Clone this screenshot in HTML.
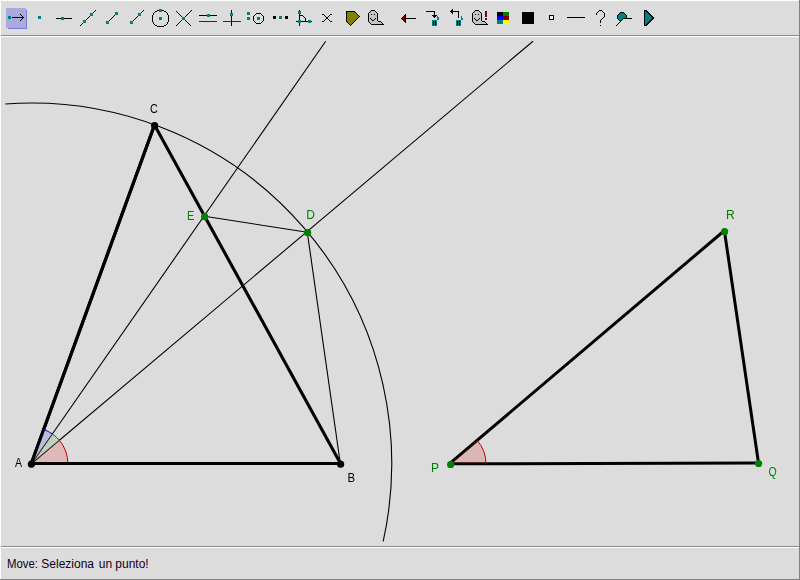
<!DOCTYPE html>
<html><head><meta charset="utf-8">
<style>
html,body{margin:0;padding:0;width:800px;height:580px;overflow:hidden;background:#dcdcdc;}
svg{display:block;font-family:"Liberation Sans",sans-serif;}
</style></head><body>
<svg width="800" height="580" viewBox="0 0 800 580">
<rect x="0" y="0" width="800" height="580" fill="#dcdcdc"/>
<g shape-rendering="crispEdges">
<rect x="0" y="0" width="800" height="1" fill="#ffffff"/>
<rect x="0" y="0" width="1" height="580" fill="#ffffff"/>
<rect x="799" y="0" width="1" height="580" fill="#808080"/>
<rect x="0" y="579" width="800" height="1" fill="#808080"/>
<rect x="1" y="35" width="798" height="1" fill="#8c8c8c"/>
<rect x="1" y="36" width="798" height="1" fill="#ffffff"/>
<rect x="1" y="546" width="798" height="1" fill="#8c8c8c"/>
<rect x="1" y="547" width="798" height="1" fill="#ffffff"/>
</g>
<g shape-rendering="crispEdges">
<rect x="6" y="8" width="20" height="1" fill="#aaaadc"/>
<rect x="6" y="9" width="20" height="1" fill="#aaaadc"/>
<rect x="159" y="9" width="3" height="1" fill="#008080"/>
<rect x="452" y="9" width="1" height="1" fill="#000000"/>
<rect x="6" y="10" width="20" height="1" fill="#aaaadc"/>
<rect x="26" y="10" width="1" height="1" fill="#7878e0"/>
<rect x="95" y="10" width="1" height="1" fill="#000000"/>
<rect x="143" y="10" width="1" height="1" fill="#000000"/>
<rect x="157" y="10" width="2" height="1" fill="#000000"/>
<rect x="159" y="10" width="3" height="1" fill="#008080"/>
<rect x="162" y="10" width="2" height="1" fill="#000000"/>
<rect x="191" y="10" width="1" height="1" fill="#000000"/>
<rect x="231" y="10" width="1" height="1" fill="#000000"/>
<rect x="299" y="10" width="1" height="1" fill="#000000"/>
<rect x="371" y="10" width="4" height="1" fill="#000000"/>
<rect x="451" y="10" width="2" height="1" fill="#000000"/>
<rect x="475" y="10" width="4" height="1" fill="#000000"/>
<rect x="599" y="10" width="3" height="1" fill="#000000"/>
<rect x="644" y="10" width="3" height="1" fill="#000000"/>
<rect x="6" y="11" width="20" height="1" fill="#aaaadc"/>
<rect x="26" y="11" width="1" height="1" fill="#7878e0"/>
<rect x="94" y="11" width="1" height="1" fill="#000000"/>
<rect x="142" y="11" width="1" height="1" fill="#000000"/>
<rect x="155" y="11" width="2" height="1" fill="#000000"/>
<rect x="159" y="11" width="3" height="1" fill="#008080"/>
<rect x="164" y="11" width="2" height="1" fill="#000000"/>
<rect x="176" y="11" width="1" height="1" fill="#000000"/>
<rect x="190" y="11" width="1" height="1" fill="#000000"/>
<rect x="231" y="11" width="1" height="1" fill="#000000"/>
<rect x="298" y="11" width="3" height="1" fill="#008080"/>
<rect x="346" y="11" width="9" height="1" fill="#000000"/>
<rect x="370" y="11" width="1" height="1" fill="#000000"/>
<rect x="371" y="11" width="4" height="1" fill="#c4c4c4"/>
<rect x="375" y="11" width="1" height="1" fill="#000000"/>
<rect x="426" y="11" width="9" height="1" fill="#000000"/>
<rect x="450" y="11" width="9" height="1" fill="#000000"/>
<rect x="474" y="11" width="1" height="1" fill="#000000"/>
<rect x="475" y="11" width="4" height="1" fill="#c4c4c4"/>
<rect x="479" y="11" width="1" height="1" fill="#000000"/>
<rect x="485" y="11" width="2" height="1" fill="#800000"/>
<rect x="598" y="11" width="1" height="1" fill="#000000"/>
<rect x="602" y="11" width="1" height="1" fill="#000000"/>
<rect x="644" y="11" width="1" height="1" fill="#000000"/>
<rect x="645" y="11" width="1" height="1" fill="#008080"/>
<rect x="646" y="11" width="2" height="1" fill="#000000"/>
<rect x="6" y="12" width="20" height="1" fill="#aaaadc"/>
<rect x="26" y="12" width="1" height="1" fill="#7878e0"/>
<rect x="93" y="12" width="1" height="1" fill="#000000"/>
<rect x="115" y="12" width="3" height="1" fill="#008080"/>
<rect x="141" y="12" width="1" height="1" fill="#000000"/>
<rect x="154" y="12" width="1" height="1" fill="#000000"/>
<rect x="166" y="12" width="1" height="1" fill="#000000"/>
<rect x="177" y="12" width="1" height="1" fill="#000000"/>
<rect x="189" y="12" width="1" height="1" fill="#000000"/>
<rect x="231" y="12" width="1" height="1" fill="#000000"/>
<rect x="247" y="12" width="3" height="1" fill="#008080"/>
<rect x="298" y="12" width="3" height="1" fill="#008080"/>
<rect x="346" y="12" width="1" height="1" fill="#000000"/>
<rect x="347" y="12" width="8" height="1" fill="#808000"/>
<rect x="355" y="12" width="1" height="1" fill="#000000"/>
<rect x="369" y="12" width="1" height="1" fill="#000000"/>
<rect x="370" y="12" width="6" height="1" fill="#c4c4c4"/>
<rect x="376" y="12" width="1" height="1" fill="#000000"/>
<rect x="434" y="12" width="1" height="1" fill="#000000"/>
<rect x="451" y="12" width="2" height="1" fill="#000000"/>
<rect x="458" y="12" width="1" height="1" fill="#000000"/>
<rect x="473" y="12" width="1" height="1" fill="#000000"/>
<rect x="474" y="12" width="6" height="1" fill="#c4c4c4"/>
<rect x="480" y="12" width="1" height="1" fill="#000000"/>
<rect x="485" y="12" width="2" height="1" fill="#800000"/>
<rect x="497" y="12" width="6" height="1" fill="#000000"/>
<rect x="503" y="12" width="6" height="1" fill="#008000"/>
<rect x="522" y="12" width="12" height="1" fill="#000000"/>
<rect x="597" y="12" width="1" height="1" fill="#000000"/>
<rect x="603" y="12" width="1" height="1" fill="#000000"/>
<rect x="620" y="12" width="4" height="1" fill="#000000"/>
<rect x="644" y="12" width="1" height="1" fill="#000000"/>
<rect x="645" y="12" width="2" height="1" fill="#008080"/>
<rect x="647" y="12" width="2" height="1" fill="#000000"/>
<rect x="6" y="13" width="20" height="1" fill="#aaaadc"/>
<rect x="26" y="13" width="1" height="1" fill="#7878e0"/>
<rect x="90" y="13" width="3" height="1" fill="#008080"/>
<rect x="115" y="13" width="3" height="1" fill="#008080"/>
<rect x="138" y="13" width="3" height="1" fill="#008080"/>
<rect x="153" y="13" width="1" height="1" fill="#000000"/>
<rect x="167" y="13" width="1" height="1" fill="#000000"/>
<rect x="178" y="13" width="1" height="1" fill="#000000"/>
<rect x="188" y="13" width="1" height="1" fill="#000000"/>
<rect x="230" y="13" width="3" height="1" fill="#008080"/>
<rect x="247" y="13" width="3" height="1" fill="#008080"/>
<rect x="256" y="13" width="5" height="1" fill="#000000"/>
<rect x="298" y="13" width="3" height="1" fill="#008080"/>
<rect x="346" y="13" width="1" height="1" fill="#000000"/>
<rect x="347" y="13" width="9" height="1" fill="#808000"/>
<rect x="356" y="13" width="1" height="1" fill="#000000"/>
<rect x="368" y="13" width="1" height="1" fill="#000000"/>
<rect x="369" y="13" width="8" height="1" fill="#c4c4c4"/>
<rect x="377" y="13" width="1" height="1" fill="#000000"/>
<rect x="434" y="13" width="1" height="1" fill="#000000"/>
<rect x="452" y="13" width="1" height="1" fill="#000000"/>
<rect x="458" y="13" width="1" height="1" fill="#000000"/>
<rect x="472" y="13" width="1" height="1" fill="#000000"/>
<rect x="473" y="13" width="8" height="1" fill="#c4c4c4"/>
<rect x="481" y="13" width="1" height="1" fill="#000000"/>
<rect x="485" y="13" width="2" height="1" fill="#800000"/>
<rect x="497" y="13" width="6" height="1" fill="#000000"/>
<rect x="503" y="13" width="6" height="1" fill="#008000"/>
<rect x="522" y="13" width="12" height="1" fill="#000000"/>
<rect x="596" y="13" width="1" height="1" fill="#000000"/>
<rect x="604" y="13" width="1" height="1" fill="#000000"/>
<rect x="619" y="13" width="1" height="1" fill="#000000"/>
<rect x="620" y="13" width="4" height="1" fill="#008080"/>
<rect x="624" y="13" width="1" height="1" fill="#000000"/>
<rect x="644" y="13" width="1" height="1" fill="#000000"/>
<rect x="645" y="13" width="3" height="1" fill="#008080"/>
<rect x="648" y="13" width="2" height="1" fill="#000000"/>
<rect x="6" y="14" width="14" height="1" fill="#aaaadc"/>
<rect x="20" y="14" width="1" height="1" fill="#000000"/>
<rect x="21" y="14" width="5" height="1" fill="#aaaadc"/>
<rect x="26" y="14" width="1" height="1" fill="#7878e0"/>
<rect x="90" y="14" width="3" height="1" fill="#008080"/>
<rect x="115" y="14" width="3" height="1" fill="#008080"/>
<rect x="138" y="14" width="3" height="1" fill="#008080"/>
<rect x="153" y="14" width="1" height="1" fill="#000000"/>
<rect x="167" y="14" width="1" height="1" fill="#000000"/>
<rect x="179" y="14" width="1" height="1" fill="#000000"/>
<rect x="187" y="14" width="1" height="1" fill="#000000"/>
<rect x="207" y="14" width="3" height="1" fill="#008080"/>
<rect x="230" y="14" width="3" height="1" fill="#008080"/>
<rect x="247" y="14" width="3" height="1" fill="#008080"/>
<rect x="255" y="14" width="1" height="1" fill="#000000"/>
<rect x="261" y="14" width="1" height="1" fill="#000000"/>
<rect x="299" y="14" width="1" height="1" fill="#000000"/>
<rect x="322" y="14" width="2" height="1" fill="#000000"/>
<rect x="330" y="14" width="2" height="1" fill="#000000"/>
<rect x="346" y="14" width="1" height="1" fill="#000000"/>
<rect x="347" y="14" width="10" height="1" fill="#808000"/>
<rect x="357" y="14" width="1" height="1" fill="#000000"/>
<rect x="368" y="14" width="1" height="1" fill="#000000"/>
<rect x="369" y="14" width="2" height="1" fill="#c4c4c4"/>
<rect x="371" y="14" width="1" height="1" fill="#000000"/>
<rect x="372" y="14" width="2" height="1" fill="#c4c4c4"/>
<rect x="374" y="14" width="1" height="1" fill="#000000"/>
<rect x="375" y="14" width="2" height="1" fill="#c4c4c4"/>
<rect x="377" y="14" width="1" height="1" fill="#000000"/>
<rect x="405" y="14" width="1" height="1" fill="#000000"/>
<rect x="434" y="14" width="1" height="1" fill="#000000"/>
<rect x="458" y="14" width="1" height="1" fill="#000000"/>
<rect x="472" y="14" width="1" height="1" fill="#000000"/>
<rect x="473" y="14" width="2" height="1" fill="#c4c4c4"/>
<rect x="475" y="14" width="1" height="1" fill="#000000"/>
<rect x="476" y="14" width="2" height="1" fill="#c4c4c4"/>
<rect x="478" y="14" width="1" height="1" fill="#000000"/>
<rect x="479" y="14" width="2" height="1" fill="#c4c4c4"/>
<rect x="481" y="14" width="1" height="1" fill="#000000"/>
<rect x="485" y="14" width="2" height="1" fill="#800000"/>
<rect x="497" y="14" width="6" height="1" fill="#000000"/>
<rect x="503" y="14" width="6" height="1" fill="#008000"/>
<rect x="522" y="14" width="12" height="1" fill="#000000"/>
<rect x="596" y="14" width="1" height="1" fill="#000000"/>
<rect x="604" y="14" width="1" height="1" fill="#000000"/>
<rect x="618" y="14" width="1" height="1" fill="#000000"/>
<rect x="619" y="14" width="6" height="1" fill="#008080"/>
<rect x="625" y="14" width="1" height="1" fill="#000000"/>
<rect x="644" y="14" width="1" height="1" fill="#000000"/>
<rect x="645" y="14" width="4" height="1" fill="#008080"/>
<rect x="649" y="14" width="2" height="1" fill="#000000"/>
<rect x="6" y="15" width="15" height="1" fill="#aaaadc"/>
<rect x="21" y="15" width="1" height="1" fill="#000000"/>
<rect x="22" y="15" width="4" height="1" fill="#aaaadc"/>
<rect x="26" y="15" width="1" height="1" fill="#7878e0"/>
<rect x="90" y="15" width="3" height="1" fill="#008080"/>
<rect x="114" y="15" width="1" height="1" fill="#000000"/>
<rect x="138" y="15" width="3" height="1" fill="#008080"/>
<rect x="152" y="15" width="1" height="1" fill="#000000"/>
<rect x="168" y="15" width="1" height="1" fill="#000000"/>
<rect x="180" y="15" width="1" height="1" fill="#000000"/>
<rect x="186" y="15" width="1" height="1" fill="#000000"/>
<rect x="199" y="15" width="8" height="1" fill="#000000"/>
<rect x="207" y="15" width="3" height="1" fill="#008080"/>
<rect x="210" y="15" width="7" height="1" fill="#000000"/>
<rect x="230" y="15" width="3" height="1" fill="#008080"/>
<rect x="254" y="15" width="1" height="1" fill="#000000"/>
<rect x="262" y="15" width="1" height="1" fill="#000000"/>
<rect x="299" y="15" width="4" height="1" fill="#000000"/>
<rect x="324" y="15" width="1" height="1" fill="#000000"/>
<rect x="329" y="15" width="1" height="1" fill="#000000"/>
<rect x="346" y="15" width="1" height="1" fill="#000000"/>
<rect x="347" y="15" width="11" height="1" fill="#808000"/>
<rect x="358" y="15" width="1" height="1" fill="#000000"/>
<rect x="368" y="15" width="1" height="1" fill="#000000"/>
<rect x="369" y="15" width="8" height="1" fill="#c4c4c4"/>
<rect x="377" y="15" width="1" height="1" fill="#000000"/>
<rect x="404" y="15" width="2" height="1" fill="#000000"/>
<rect x="432" y="15" width="5" height="1" fill="#000000"/>
<rect x="458" y="15" width="1" height="1" fill="#000000"/>
<rect x="472" y="15" width="1" height="1" fill="#000000"/>
<rect x="473" y="15" width="8" height="1" fill="#c4c4c4"/>
<rect x="481" y="15" width="1" height="1" fill="#000000"/>
<rect x="485" y="15" width="2" height="1" fill="#800000"/>
<rect x="497" y="15" width="6" height="1" fill="#000000"/>
<rect x="503" y="15" width="6" height="1" fill="#008000"/>
<rect x="522" y="15" width="12" height="1" fill="#000000"/>
<rect x="549" y="15" width="5" height="1" fill="#000000"/>
<rect x="604" y="15" width="1" height="1" fill="#000000"/>
<rect x="617" y="15" width="1" height="1" fill="#000000"/>
<rect x="618" y="15" width="8" height="1" fill="#008080"/>
<rect x="626" y="15" width="1" height="1" fill="#000000"/>
<rect x="644" y="15" width="1" height="1" fill="#000000"/>
<rect x="645" y="15" width="5" height="1" fill="#008080"/>
<rect x="650" y="15" width="2" height="1" fill="#000000"/>
<rect x="6" y="16" width="2" height="1" fill="#aaaadc"/>
<rect x="8" y="16" width="3" height="1" fill="#008080"/>
<rect x="11" y="16" width="11" height="1" fill="#aaaadc"/>
<rect x="22" y="16" width="1" height="1" fill="#000000"/>
<rect x="23" y="16" width="3" height="1" fill="#aaaadc"/>
<rect x="26" y="16" width="1" height="1" fill="#7878e0"/>
<rect x="38" y="16" width="3" height="1" fill="#008080"/>
<rect x="89" y="16" width="1" height="1" fill="#000000"/>
<rect x="113" y="16" width="1" height="1" fill="#000000"/>
<rect x="137" y="16" width="1" height="1" fill="#000000"/>
<rect x="152" y="16" width="1" height="1" fill="#000000"/>
<rect x="168" y="16" width="1" height="1" fill="#000000"/>
<rect x="181" y="16" width="1" height="1" fill="#000000"/>
<rect x="185" y="16" width="1" height="1" fill="#000000"/>
<rect x="207" y="16" width="3" height="1" fill="#008080"/>
<rect x="231" y="16" width="1" height="1" fill="#000000"/>
<rect x="253" y="16" width="1" height="1" fill="#000000"/>
<rect x="263" y="16" width="1" height="1" fill="#000000"/>
<rect x="273" y="16" width="3" height="1" fill="#000000"/>
<rect x="279" y="16" width="3" height="1" fill="#008080"/>
<rect x="285" y="16" width="3" height="1" fill="#000000"/>
<rect x="299" y="16" width="1" height="1" fill="#000000"/>
<rect x="303" y="16" width="1" height="1" fill="#000000"/>
<rect x="325" y="16" width="1" height="1" fill="#000000"/>
<rect x="328" y="16" width="1" height="1" fill="#000000"/>
<rect x="346" y="16" width="1" height="1" fill="#000000"/>
<rect x="347" y="16" width="12" height="1" fill="#808000"/>
<rect x="359" y="16" width="1" height="1" fill="#000000"/>
<rect x="368" y="16" width="1" height="1" fill="#000000"/>
<rect x="369" y="16" width="8" height="1" fill="#c4c4c4"/>
<rect x="377" y="16" width="1" height="1" fill="#000000"/>
<rect x="403" y="16" width="1" height="1" fill="#000000"/>
<rect x="404" y="16" width="1" height="1" fill="#800000"/>
<rect x="405" y="16" width="1" height="1" fill="#000000"/>
<rect x="433" y="16" width="3" height="1" fill="#000000"/>
<rect x="437" y="16" width="1" height="1" fill="#008080"/>
<rect x="458" y="16" width="1" height="1" fill="#000000"/>
<rect x="461" y="16" width="1" height="1" fill="#008080"/>
<rect x="472" y="16" width="1" height="1" fill="#000000"/>
<rect x="473" y="16" width="8" height="1" fill="#c4c4c4"/>
<rect x="481" y="16" width="1" height="1" fill="#000000"/>
<rect x="485" y="16" width="2" height="1" fill="#800000"/>
<rect x="497" y="16" width="6" height="1" fill="#0000ff"/>
<rect x="503" y="16" width="6" height="1" fill="#800000"/>
<rect x="522" y="16" width="12" height="1" fill="#000000"/>
<rect x="549" y="16" width="1" height="1" fill="#000000"/>
<rect x="550" y="16" width="1" height="1" fill="#ffffff"/>
<rect x="551" y="16" width="1" height="1" fill="#f0f0f0"/>
<rect x="552" y="16" width="1" height="1" fill="#ffffff"/>
<rect x="553" y="16" width="1" height="1" fill="#000000"/>
<rect x="604" y="16" width="1" height="1" fill="#000000"/>
<rect x="617" y="16" width="1" height="1" fill="#000000"/>
<rect x="618" y="16" width="8" height="1" fill="#008080"/>
<rect x="626" y="16" width="1" height="1" fill="#000000"/>
<rect x="644" y="16" width="1" height="1" fill="#000000"/>
<rect x="645" y="16" width="6" height="1" fill="#008080"/>
<rect x="651" y="16" width="2" height="1" fill="#000000"/>
<rect x="6" y="17" width="2" height="1" fill="#aaaadc"/>
<rect x="8" y="17" width="3" height="1" fill="#008080"/>
<rect x="11" y="17" width="1" height="1" fill="#aaaadc"/>
<rect x="12" y="17" width="12" height="1" fill="#000000"/>
<rect x="24" y="17" width="2" height="1" fill="#aaaadc"/>
<rect x="26" y="17" width="1" height="1" fill="#7878e0"/>
<rect x="38" y="17" width="3" height="1" fill="#008080"/>
<rect x="61" y="17" width="3" height="1" fill="#008080"/>
<rect x="88" y="17" width="1" height="1" fill="#000000"/>
<rect x="112" y="17" width="1" height="1" fill="#000000"/>
<rect x="136" y="17" width="1" height="1" fill="#000000"/>
<rect x="152" y="17" width="1" height="1" fill="#000000"/>
<rect x="159" y="17" width="3" height="1" fill="#008080"/>
<rect x="168" y="17" width="1" height="1" fill="#000000"/>
<rect x="182" y="17" width="3" height="1" fill="#008080"/>
<rect x="231" y="17" width="1" height="1" fill="#000000"/>
<rect x="247" y="17" width="3" height="1" fill="#008080"/>
<rect x="253" y="17" width="1" height="1" fill="#000000"/>
<rect x="257" y="17" width="3" height="1" fill="#008080"/>
<rect x="263" y="17" width="1" height="1" fill="#000000"/>
<rect x="273" y="17" width="3" height="1" fill="#000000"/>
<rect x="279" y="17" width="3" height="1" fill="#008080"/>
<rect x="285" y="17" width="3" height="1" fill="#000000"/>
<rect x="299" y="17" width="1" height="1" fill="#000000"/>
<rect x="304" y="17" width="1" height="1" fill="#000000"/>
<rect x="326" y="17" width="2" height="1" fill="#000000"/>
<rect x="346" y="17" width="1" height="1" fill="#000000"/>
<rect x="347" y="17" width="11" height="1" fill="#808000"/>
<rect x="358" y="17" width="1" height="1" fill="#000000"/>
<rect x="368" y="17" width="1" height="1" fill="#000000"/>
<rect x="369" y="17" width="8" height="1" fill="#c4c4c4"/>
<rect x="377" y="17" width="1" height="1" fill="#000000"/>
<rect x="402" y="17" width="1" height="1" fill="#000000"/>
<rect x="403" y="17" width="2" height="1" fill="#800000"/>
<rect x="405" y="17" width="1" height="1" fill="#000000"/>
<rect x="434" y="17" width="1" height="1" fill="#000000"/>
<rect x="437" y="17" width="2" height="1" fill="#008080"/>
<rect x="458" y="17" width="1" height="1" fill="#000000"/>
<rect x="461" y="17" width="1" height="1" fill="#008080"/>
<rect x="472" y="17" width="1" height="1" fill="#000000"/>
<rect x="473" y="17" width="8" height="1" fill="#c4c4c4"/>
<rect x="481" y="17" width="1" height="1" fill="#000000"/>
<rect x="497" y="17" width="6" height="1" fill="#0000ff"/>
<rect x="503" y="17" width="6" height="1" fill="#800000"/>
<rect x="522" y="17" width="12" height="1" fill="#000000"/>
<rect x="549" y="17" width="1" height="1" fill="#000000"/>
<rect x="550" y="17" width="3" height="1" fill="#f0f0f0"/>
<rect x="553" y="17" width="1" height="1" fill="#000000"/>
<rect x="567" y="17" width="18" height="1" fill="#000000"/>
<rect x="603" y="17" width="1" height="1" fill="#000000"/>
<rect x="617" y="17" width="1" height="1" fill="#000000"/>
<rect x="618" y="17" width="8" height="1" fill="#008080"/>
<rect x="626" y="17" width="1" height="1" fill="#000000"/>
<rect x="644" y="17" width="1" height="1" fill="#000000"/>
<rect x="645" y="17" width="7" height="1" fill="#008080"/>
<rect x="652" y="17" width="2" height="1" fill="#000000"/>
<rect x="6" y="18" width="2" height="1" fill="#aaaadc"/>
<rect x="8" y="18" width="3" height="1" fill="#008080"/>
<rect x="11" y="18" width="11" height="1" fill="#aaaadc"/>
<rect x="22" y="18" width="1" height="1" fill="#000000"/>
<rect x="23" y="18" width="3" height="1" fill="#aaaadc"/>
<rect x="26" y="18" width="1" height="1" fill="#7878e0"/>
<rect x="38" y="18" width="3" height="1" fill="#008080"/>
<rect x="56" y="18" width="5" height="1" fill="#000000"/>
<rect x="61" y="18" width="3" height="1" fill="#008080"/>
<rect x="64" y="18" width="8" height="1" fill="#000000"/>
<rect x="87" y="18" width="1" height="1" fill="#000000"/>
<rect x="111" y="18" width="1" height="1" fill="#000000"/>
<rect x="135" y="18" width="1" height="1" fill="#000000"/>
<rect x="152" y="18" width="1" height="1" fill="#000000"/>
<rect x="159" y="18" width="3" height="1" fill="#008080"/>
<rect x="168" y="18" width="1" height="1" fill="#000000"/>
<rect x="182" y="18" width="3" height="1" fill="#008080"/>
<rect x="231" y="18" width="1" height="1" fill="#000000"/>
<rect x="247" y="18" width="3" height="1" fill="#008080"/>
<rect x="253" y="18" width="1" height="1" fill="#000000"/>
<rect x="257" y="18" width="3" height="1" fill="#008080"/>
<rect x="263" y="18" width="1" height="1" fill="#000000"/>
<rect x="273" y="18" width="3" height="1" fill="#000000"/>
<rect x="279" y="18" width="3" height="1" fill="#008080"/>
<rect x="285" y="18" width="3" height="1" fill="#000000"/>
<rect x="299" y="18" width="1" height="1" fill="#000000"/>
<rect x="305" y="18" width="1" height="1" fill="#000000"/>
<rect x="326" y="18" width="2" height="1" fill="#000000"/>
<rect x="346" y="18" width="1" height="1" fill="#000000"/>
<rect x="347" y="18" width="10" height="1" fill="#808000"/>
<rect x="357" y="18" width="1" height="1" fill="#000000"/>
<rect x="368" y="18" width="1" height="1" fill="#000000"/>
<rect x="369" y="18" width="1" height="1" fill="#c4c4c4"/>
<rect x="370" y="18" width="1" height="1" fill="#000000"/>
<rect x="371" y="18" width="4" height="1" fill="#c4c4c4"/>
<rect x="375" y="18" width="1" height="1" fill="#000000"/>
<rect x="376" y="18" width="1" height="1" fill="#c4c4c4"/>
<rect x="377" y="18" width="1" height="1" fill="#000000"/>
<rect x="401" y="18" width="1" height="1" fill="#000000"/>
<rect x="402" y="18" width="3" height="1" fill="#800000"/>
<rect x="405" y="18" width="11" height="1" fill="#000000"/>
<rect x="437" y="18" width="2" height="1" fill="#008080"/>
<rect x="461" y="18" width="2" height="1" fill="#008080"/>
<rect x="472" y="18" width="1" height="1" fill="#000000"/>
<rect x="473" y="18" width="1" height="1" fill="#c4c4c4"/>
<rect x="474" y="18" width="1" height="1" fill="#000000"/>
<rect x="475" y="18" width="4" height="1" fill="#c4c4c4"/>
<rect x="479" y="18" width="1" height="1" fill="#000000"/>
<rect x="480" y="18" width="1" height="1" fill="#c4c4c4"/>
<rect x="481" y="18" width="1" height="1" fill="#000000"/>
<rect x="485" y="18" width="2" height="1" fill="#800000"/>
<rect x="497" y="18" width="6" height="1" fill="#0000ff"/>
<rect x="503" y="18" width="6" height="1" fill="#800000"/>
<rect x="522" y="18" width="12" height="1" fill="#000000"/>
<rect x="549" y="18" width="1" height="1" fill="#000000"/>
<rect x="550" y="18" width="1" height="1" fill="#ffffff"/>
<rect x="551" y="18" width="1" height="1" fill="#f0f0f0"/>
<rect x="552" y="18" width="1" height="1" fill="#ffffff"/>
<rect x="553" y="18" width="1" height="1" fill="#000000"/>
<rect x="602" y="18" width="1" height="1" fill="#000000"/>
<rect x="617" y="18" width="1" height="1" fill="#000000"/>
<rect x="618" y="18" width="5" height="1" fill="#008080"/>
<rect x="623" y="18" width="9" height="1" fill="#000000"/>
<rect x="644" y="18" width="1" height="1" fill="#000000"/>
<rect x="645" y="18" width="7" height="1" fill="#008080"/>
<rect x="652" y="18" width="2" height="1" fill="#000000"/>
<rect x="6" y="19" width="15" height="1" fill="#aaaadc"/>
<rect x="21" y="19" width="1" height="1" fill="#000000"/>
<rect x="22" y="19" width="4" height="1" fill="#aaaadc"/>
<rect x="26" y="19" width="1" height="1" fill="#7878e0"/>
<rect x="61" y="19" width="3" height="1" fill="#008080"/>
<rect x="86" y="19" width="1" height="1" fill="#000000"/>
<rect x="110" y="19" width="1" height="1" fill="#000000"/>
<rect x="134" y="19" width="1" height="1" fill="#000000"/>
<rect x="152" y="19" width="1" height="1" fill="#000000"/>
<rect x="159" y="19" width="3" height="1" fill="#008080"/>
<rect x="168" y="19" width="1" height="1" fill="#000000"/>
<rect x="182" y="19" width="3" height="1" fill="#008080"/>
<rect x="231" y="19" width="1" height="1" fill="#000000"/>
<rect x="247" y="19" width="3" height="1" fill="#008080"/>
<rect x="253" y="19" width="1" height="1" fill="#000000"/>
<rect x="257" y="19" width="3" height="1" fill="#008080"/>
<rect x="263" y="19" width="1" height="1" fill="#000000"/>
<rect x="299" y="19" width="1" height="1" fill="#000000"/>
<rect x="305" y="19" width="1" height="1" fill="#000000"/>
<rect x="325" y="19" width="1" height="1" fill="#000000"/>
<rect x="328" y="19" width="1" height="1" fill="#000000"/>
<rect x="346" y="19" width="1" height="1" fill="#000000"/>
<rect x="347" y="19" width="9" height="1" fill="#808000"/>
<rect x="356" y="19" width="1" height="1" fill="#000000"/>
<rect x="368" y="19" width="1" height="1" fill="#000000"/>
<rect x="369" y="19" width="2" height="1" fill="#c4c4c4"/>
<rect x="371" y="19" width="1" height="1" fill="#000000"/>
<rect x="372" y="19" width="2" height="1" fill="#c4c4c4"/>
<rect x="374" y="19" width="1" height="1" fill="#000000"/>
<rect x="375" y="19" width="2" height="1" fill="#c4c4c4"/>
<rect x="377" y="19" width="1" height="1" fill="#000000"/>
<rect x="402" y="19" width="1" height="1" fill="#000000"/>
<rect x="403" y="19" width="2" height="1" fill="#800000"/>
<rect x="405" y="19" width="1" height="1" fill="#000000"/>
<rect x="437" y="19" width="2" height="1" fill="#008080"/>
<rect x="461" y="19" width="2" height="1" fill="#008080"/>
<rect x="472" y="19" width="1" height="1" fill="#000000"/>
<rect x="473" y="19" width="2" height="1" fill="#c4c4c4"/>
<rect x="475" y="19" width="1" height="1" fill="#000000"/>
<rect x="476" y="19" width="2" height="1" fill="#c4c4c4"/>
<rect x="478" y="19" width="1" height="1" fill="#000000"/>
<rect x="479" y="19" width="2" height="1" fill="#c4c4c4"/>
<rect x="481" y="19" width="1" height="1" fill="#000000"/>
<rect x="485" y="19" width="2" height="1" fill="#800000"/>
<rect x="497" y="19" width="6" height="1" fill="#0000ff"/>
<rect x="503" y="19" width="6" height="1" fill="#800000"/>
<rect x="522" y="19" width="12" height="1" fill="#000000"/>
<rect x="549" y="19" width="5" height="1" fill="#000000"/>
<rect x="601" y="19" width="1" height="1" fill="#000000"/>
<rect x="618" y="19" width="1" height="1" fill="#000000"/>
<rect x="619" y="19" width="3" height="1" fill="#008080"/>
<rect x="622" y="19" width="1" height="1" fill="#000000"/>
<rect x="644" y="19" width="1" height="1" fill="#000000"/>
<rect x="645" y="19" width="6" height="1" fill="#008080"/>
<rect x="651" y="19" width="2" height="1" fill="#000000"/>
<rect x="6" y="20" width="14" height="1" fill="#aaaadc"/>
<rect x="20" y="20" width="1" height="1" fill="#000000"/>
<rect x="21" y="20" width="5" height="1" fill="#aaaadc"/>
<rect x="26" y="20" width="1" height="1" fill="#7878e0"/>
<rect x="83" y="20" width="3" height="1" fill="#008080"/>
<rect x="109" y="20" width="1" height="1" fill="#000000"/>
<rect x="133" y="20" width="1" height="1" fill="#000000"/>
<rect x="152" y="20" width="1" height="1" fill="#000000"/>
<rect x="168" y="20" width="1" height="1" fill="#000000"/>
<rect x="181" y="20" width="1" height="1" fill="#000000"/>
<rect x="185" y="20" width="1" height="1" fill="#000000"/>
<rect x="231" y="20" width="1" height="1" fill="#000000"/>
<rect x="253" y="20" width="1" height="1" fill="#000000"/>
<rect x="263" y="20" width="1" height="1" fill="#000000"/>
<rect x="298" y="20" width="3" height="1" fill="#008080"/>
<rect x="305" y="20" width="1" height="1" fill="#000000"/>
<rect x="308" y="20" width="3" height="1" fill="#008080"/>
<rect x="324" y="20" width="1" height="1" fill="#000000"/>
<rect x="329" y="20" width="1" height="1" fill="#000000"/>
<rect x="346" y="20" width="1" height="1" fill="#000000"/>
<rect x="347" y="20" width="8" height="1" fill="#808000"/>
<rect x="355" y="20" width="1" height="1" fill="#000000"/>
<rect x="368" y="20" width="1" height="1" fill="#000000"/>
<rect x="369" y="20" width="3" height="1" fill="#c4c4c4"/>
<rect x="372" y="20" width="2" height="1" fill="#000000"/>
<rect x="374" y="20" width="3" height="1" fill="#c4c4c4"/>
<rect x="377" y="20" width="1" height="1" fill="#000000"/>
<rect x="403" y="20" width="1" height="1" fill="#000000"/>
<rect x="404" y="20" width="1" height="1" fill="#800000"/>
<rect x="405" y="20" width="1" height="1" fill="#000000"/>
<rect x="432" y="20" width="5" height="1" fill="#008080"/>
<rect x="456" y="20" width="5" height="1" fill="#008080"/>
<rect x="472" y="20" width="1" height="1" fill="#000000"/>
<rect x="473" y="20" width="3" height="1" fill="#c4c4c4"/>
<rect x="476" y="20" width="2" height="1" fill="#000000"/>
<rect x="478" y="20" width="3" height="1" fill="#c4c4c4"/>
<rect x="481" y="20" width="1" height="1" fill="#000000"/>
<rect x="497" y="20" width="6" height="1" fill="#008080"/>
<rect x="503" y="20" width="6" height="1" fill="#ffff00"/>
<rect x="522" y="20" width="12" height="1" fill="#000000"/>
<rect x="600" y="20" width="1" height="1" fill="#000000"/>
<rect x="619" y="20" width="1" height="1" fill="#000000"/>
<rect x="620" y="20" width="1" height="1" fill="#008080"/>
<rect x="621" y="20" width="1" height="1" fill="#000000"/>
<rect x="644" y="20" width="1" height="1" fill="#000000"/>
<rect x="645" y="20" width="5" height="1" fill="#008080"/>
<rect x="650" y="20" width="2" height="1" fill="#000000"/>
<rect x="6" y="21" width="20" height="1" fill="#aaaadc"/>
<rect x="26" y="21" width="1" height="1" fill="#7878e0"/>
<rect x="83" y="21" width="3" height="1" fill="#008080"/>
<rect x="106" y="21" width="3" height="1" fill="#008080"/>
<rect x="130" y="21" width="3" height="1" fill="#008080"/>
<rect x="152" y="21" width="1" height="1" fill="#000000"/>
<rect x="168" y="21" width="1" height="1" fill="#000000"/>
<rect x="180" y="21" width="1" height="1" fill="#000000"/>
<rect x="186" y="21" width="1" height="1" fill="#000000"/>
<rect x="199" y="21" width="18" height="1" fill="#900000"/>
<rect x="223" y="21" width="8" height="1" fill="#900000"/>
<rect x="231" y="21" width="1" height="1" fill="#000000"/>
<rect x="232" y="21" width="9" height="1" fill="#900000"/>
<rect x="254" y="21" width="1" height="1" fill="#000000"/>
<rect x="262" y="21" width="1" height="1" fill="#000000"/>
<rect x="296" y="21" width="2" height="1" fill="#000000"/>
<rect x="298" y="21" width="3" height="1" fill="#008080"/>
<rect x="301" y="21" width="7" height="1" fill="#000000"/>
<rect x="308" y="21" width="3" height="1" fill="#008080"/>
<rect x="311" y="21" width="1" height="1" fill="#000000"/>
<rect x="322" y="21" width="2" height="1" fill="#000000"/>
<rect x="330" y="21" width="2" height="1" fill="#000000"/>
<rect x="346" y="21" width="1" height="1" fill="#000000"/>
<rect x="347" y="21" width="7" height="1" fill="#808000"/>
<rect x="354" y="21" width="1" height="1" fill="#000000"/>
<rect x="368" y="21" width="1" height="1" fill="#000000"/>
<rect x="369" y="21" width="9" height="1" fill="#c4c4c4"/>
<rect x="378" y="21" width="3" height="1" fill="#000000"/>
<rect x="404" y="21" width="2" height="1" fill="#000000"/>
<rect x="432" y="21" width="1" height="1" fill="#008080"/>
<rect x="433" y="21" width="1" height="1" fill="#000000"/>
<rect x="434" y="21" width="1" height="1" fill="#008080"/>
<rect x="435" y="21" width="1" height="1" fill="#000000"/>
<rect x="436" y="21" width="1" height="1" fill="#008080"/>
<rect x="456" y="21" width="1" height="1" fill="#008080"/>
<rect x="457" y="21" width="1" height="1" fill="#000000"/>
<rect x="458" y="21" width="1" height="1" fill="#008080"/>
<rect x="459" y="21" width="1" height="1" fill="#000000"/>
<rect x="460" y="21" width="1" height="1" fill="#008080"/>
<rect x="472" y="21" width="1" height="1" fill="#000000"/>
<rect x="473" y="21" width="9" height="1" fill="#c4c4c4"/>
<rect x="482" y="21" width="3" height="1" fill="#000000"/>
<rect x="497" y="21" width="6" height="1" fill="#008080"/>
<rect x="503" y="21" width="6" height="1" fill="#ffff00"/>
<rect x="522" y="21" width="12" height="1" fill="#000000"/>
<rect x="600" y="21" width="1" height="1" fill="#000000"/>
<rect x="620" y="21" width="1" height="1" fill="#000000"/>
<rect x="644" y="21" width="1" height="1" fill="#000000"/>
<rect x="645" y="21" width="4" height="1" fill="#008080"/>
<rect x="649" y="21" width="2" height="1" fill="#000000"/>
<rect x="6" y="22" width="20" height="1" fill="#aaaadc"/>
<rect x="26" y="22" width="1" height="1" fill="#7878e0"/>
<rect x="83" y="22" width="3" height="1" fill="#008080"/>
<rect x="106" y="22" width="3" height="1" fill="#008080"/>
<rect x="130" y="22" width="3" height="1" fill="#008080"/>
<rect x="153" y="22" width="1" height="1" fill="#000000"/>
<rect x="167" y="22" width="1" height="1" fill="#000000"/>
<rect x="179" y="22" width="1" height="1" fill="#000000"/>
<rect x="187" y="22" width="1" height="1" fill="#000000"/>
<rect x="231" y="22" width="1" height="1" fill="#000000"/>
<rect x="255" y="22" width="1" height="1" fill="#000000"/>
<rect x="261" y="22" width="1" height="1" fill="#000000"/>
<rect x="298" y="22" width="3" height="1" fill="#008080"/>
<rect x="308" y="22" width="3" height="1" fill="#008080"/>
<rect x="347" y="22" width="1" height="1" fill="#000000"/>
<rect x="348" y="22" width="5" height="1" fill="#808000"/>
<rect x="353" y="22" width="1" height="1" fill="#000000"/>
<rect x="369" y="22" width="1" height="1" fill="#000000"/>
<rect x="370" y="22" width="11" height="1" fill="#c4c4c4"/>
<rect x="381" y="22" width="1" height="1" fill="#000000"/>
<rect x="405" y="22" width="1" height="1" fill="#000000"/>
<rect x="432" y="22" width="1" height="1" fill="#008080"/>
<rect x="433" y="22" width="1" height="1" fill="#000000"/>
<rect x="434" y="22" width="1" height="1" fill="#008080"/>
<rect x="435" y="22" width="1" height="1" fill="#000000"/>
<rect x="436" y="22" width="1" height="1" fill="#008080"/>
<rect x="456" y="22" width="1" height="1" fill="#008080"/>
<rect x="457" y="22" width="1" height="1" fill="#000000"/>
<rect x="458" y="22" width="1" height="1" fill="#008080"/>
<rect x="459" y="22" width="1" height="1" fill="#000000"/>
<rect x="460" y="22" width="1" height="1" fill="#008080"/>
<rect x="473" y="22" width="1" height="1" fill="#000000"/>
<rect x="474" y="22" width="11" height="1" fill="#c4c4c4"/>
<rect x="485" y="22" width="1" height="1" fill="#000000"/>
<rect x="497" y="22" width="6" height="1" fill="#008080"/>
<rect x="503" y="22" width="6" height="1" fill="#ffff00"/>
<rect x="522" y="22" width="12" height="1" fill="#000000"/>
<rect x="600" y="22" width="1" height="1" fill="#000000"/>
<rect x="619" y="22" width="1" height="1" fill="#000000"/>
<rect x="644" y="22" width="1" height="1" fill="#000000"/>
<rect x="645" y="22" width="3" height="1" fill="#008080"/>
<rect x="648" y="22" width="2" height="1" fill="#000000"/>
<rect x="6" y="23" width="20" height="1" fill="#aaaadc"/>
<rect x="26" y="23" width="1" height="1" fill="#7878e0"/>
<rect x="82" y="23" width="1" height="1" fill="#000000"/>
<rect x="106" y="23" width="3" height="1" fill="#008080"/>
<rect x="130" y="23" width="3" height="1" fill="#008080"/>
<rect x="153" y="23" width="1" height="1" fill="#000000"/>
<rect x="167" y="23" width="1" height="1" fill="#000000"/>
<rect x="178" y="23" width="1" height="1" fill="#000000"/>
<rect x="188" y="23" width="1" height="1" fill="#000000"/>
<rect x="231" y="23" width="1" height="1" fill="#000000"/>
<rect x="256" y="23" width="5" height="1" fill="#000000"/>
<rect x="299" y="23" width="1" height="1" fill="#000000"/>
<rect x="348" y="23" width="1" height="1" fill="#000000"/>
<rect x="349" y="23" width="3" height="1" fill="#808000"/>
<rect x="352" y="23" width="1" height="1" fill="#000000"/>
<rect x="370" y="23" width="1" height="1" fill="#000000"/>
<rect x="371" y="23" width="11" height="1" fill="#c4c4c4"/>
<rect x="382" y="23" width="1" height="1" fill="#000000"/>
<rect x="432" y="23" width="1" height="1" fill="#008080"/>
<rect x="433" y="23" width="1" height="1" fill="#000000"/>
<rect x="434" y="23" width="1" height="1" fill="#008080"/>
<rect x="435" y="23" width="1" height="1" fill="#000000"/>
<rect x="436" y="23" width="1" height="1" fill="#008080"/>
<rect x="456" y="23" width="1" height="1" fill="#008080"/>
<rect x="457" y="23" width="1" height="1" fill="#000000"/>
<rect x="458" y="23" width="1" height="1" fill="#008080"/>
<rect x="459" y="23" width="1" height="1" fill="#000000"/>
<rect x="460" y="23" width="1" height="1" fill="#008080"/>
<rect x="474" y="23" width="1" height="1" fill="#000000"/>
<rect x="475" y="23" width="11" height="1" fill="#c4c4c4"/>
<rect x="486" y="23" width="1" height="1" fill="#000000"/>
<rect x="497" y="23" width="6" height="1" fill="#008080"/>
<rect x="503" y="23" width="6" height="1" fill="#ffff00"/>
<rect x="522" y="23" width="12" height="1" fill="#000000"/>
<rect x="618" y="23" width="1" height="1" fill="#000000"/>
<rect x="644" y="23" width="1" height="1" fill="#000000"/>
<rect x="645" y="23" width="2" height="1" fill="#008080"/>
<rect x="647" y="23" width="2" height="1" fill="#000000"/>
<rect x="6" y="24" width="20" height="1" fill="#aaaadc"/>
<rect x="26" y="24" width="1" height="1" fill="#7878e0"/>
<rect x="81" y="24" width="1" height="1" fill="#000000"/>
<rect x="154" y="24" width="1" height="1" fill="#000000"/>
<rect x="166" y="24" width="1" height="1" fill="#000000"/>
<rect x="177" y="24" width="1" height="1" fill="#000000"/>
<rect x="189" y="24" width="1" height="1" fill="#000000"/>
<rect x="231" y="24" width="1" height="1" fill="#000000"/>
<rect x="299" y="24" width="1" height="1" fill="#000000"/>
<rect x="349" y="24" width="1" height="1" fill="#000000"/>
<rect x="350" y="24" width="1" height="1" fill="#808000"/>
<rect x="351" y="24" width="1" height="1" fill="#000000"/>
<rect x="371" y="24" width="13" height="1" fill="#000000"/>
<rect x="432" y="24" width="1" height="1" fill="#008080"/>
<rect x="433" y="24" width="1" height="1" fill="#000000"/>
<rect x="434" y="24" width="1" height="1" fill="#008080"/>
<rect x="435" y="24" width="1" height="1" fill="#000000"/>
<rect x="436" y="24" width="1" height="1" fill="#008080"/>
<rect x="456" y="24" width="1" height="1" fill="#008080"/>
<rect x="457" y="24" width="1" height="1" fill="#000000"/>
<rect x="458" y="24" width="1" height="1" fill="#008080"/>
<rect x="459" y="24" width="1" height="1" fill="#000000"/>
<rect x="460" y="24" width="1" height="1" fill="#008080"/>
<rect x="475" y="24" width="13" height="1" fill="#000000"/>
<rect x="617" y="24" width="1" height="1" fill="#000000"/>
<rect x="644" y="24" width="1" height="1" fill="#000000"/>
<rect x="645" y="24" width="1" height="1" fill="#008080"/>
<rect x="646" y="24" width="2" height="1" fill="#000000"/>
<rect x="6" y="25" width="20" height="1" fill="#aaaadc"/>
<rect x="26" y="25" width="1" height="1" fill="#7878e0"/>
<rect x="80" y="25" width="1" height="1" fill="#000000"/>
<rect x="155" y="25" width="2" height="1" fill="#000000"/>
<rect x="164" y="25" width="2" height="1" fill="#000000"/>
<rect x="176" y="25" width="1" height="1" fill="#000000"/>
<rect x="190" y="25" width="1" height="1" fill="#000000"/>
<rect x="231" y="25" width="1" height="1" fill="#000000"/>
<rect x="299" y="25" width="1" height="1" fill="#000000"/>
<rect x="350" y="25" width="1" height="1" fill="#000000"/>
<rect x="432" y="25" width="5" height="1" fill="#008080"/>
<rect x="456" y="25" width="5" height="1" fill="#008080"/>
<rect x="600" y="25" width="1" height="1" fill="#000000"/>
<rect x="616" y="25" width="1" height="1" fill="#000000"/>
<rect x="644" y="25" width="3" height="1" fill="#000000"/>
<rect x="6" y="26" width="20" height="1" fill="#aaaadc"/>
<rect x="26" y="26" width="1" height="1" fill="#7878e0"/>
<rect x="157" y="26" width="7" height="1" fill="#000000"/>
<rect x="6" y="27" width="20" height="1" fill="#aaaadc"/>
<rect x="26" y="27" width="1" height="1" fill="#7878e0"/>
<rect x="8" y="28" width="19" height="1" fill="#7878e0"/>
</g>
<g id="canvas">
<!-- circle arc -->
<path d="M5.25 104.04 A360.4 360.4 0 0 1 383.16 541.5" fill="none" stroke="#000" stroke-width="1.1"/>
<!-- rays -->
<line x1="31.8" y1="463.5" x2="325.7" y2="41.25" stroke="#000" stroke-width="1.1"/>
<line x1="31.8" y1="463.5" x2="533" y2="41.25" stroke="#000" stroke-width="1.1"/>
<line x1="204.5" y1="216.3" x2="307.3" y2="232.3" stroke="#000" stroke-width="1.1"/>
<line x1="307.3" y1="232.3" x2="340.3" y2="463.5" stroke="#000" stroke-width="1.1"/>
<!-- triangle ABC -->
<path d="M31.3 463.5 L340.5 463.5 L154.5 125 Z" fill="none" stroke="#000" stroke-width="3.1" stroke-linejoin="round"/>
<!-- angle fills at A -->
<path d="M31.80 463.50 L67.80 463.50 A36 36 0 0 0 59.33 440.31 Z" fill="#dfb9b9"/>
<path d="M31.80 463.50 L59.33 440.31 A36 36 0 0 0 52.37 433.95 Z" fill="#bcd4bc"/>
<path d="M31.80 463.50 L52.37 433.95 A36 36 0 0 0 44.07 429.65 Z" fill="#bcbcde"/>
<path d="M31.80 463.50 L59.33 440.31 M31.80 463.50 L52.37 433.95" fill="none" stroke="#000" stroke-width="1.1" stroke-opacity="0.75"/>
<path d="M31.3 463.5 L154.5 125" fill="none" stroke="#000" stroke-width="3.1"/>
<path d="M67.80 463.50 A36 36 0 0 0 59.33 440.31" fill="none" stroke="#c00000" stroke-width="1"/>
<path d="M59.33 440.31 A36 36 0 0 0 52.37 433.95" fill="none" stroke="#008000" stroke-width="1"/>
<path d="M52.37 433.95 A36 36 0 0 0 44.07 429.65" fill="none" stroke="#0000c0" stroke-width="1"/>
<path d="M31.3 463.5 L340.5 463.5" fill="none" stroke="#000" stroke-width="3.1"/>
<!-- triangle PQR -->
<g fill="none" stroke="#000" stroke-width="3" stroke-linecap="round">
<path d="M450.5 463.8 L758.5 463.0"/>
<path d="M758.5 463.0 L724.5 231.5"/>
<path d="M724.5 230.5 L450.5 462.9"/>
</g>
<path d="M450.5 463.8 L486.00 463.71 A35.5 35.5 0 0 0 477.12 440.32 L450.5 462.9 Z" fill="#d00000" fill-opacity="0.17"/>
<path d="M486.00 463.71 A35.5 35.5 0 0 0 477.12 440.32" fill="none" stroke="#c00000" stroke-width="1"/>
<!-- points -->
<g transform="translate(0.1,0.7)">
<circle cx="31.3" cy="463.5" r="3.6" fill="#000"/>
<circle cx="340.5" cy="463.5" r="3.6" fill="#000"/>
<circle cx="154.5" cy="125" r="3.6" fill="#000"/>
<circle cx="204.5" cy="216" r="3.6" fill="#008000"/>
<circle cx="307.5" cy="232" r="3.6" fill="#008000"/>
<circle cx="450.5" cy="463.8" r="3.6" fill="#008000"/>
<circle cx="758.5" cy="462.8" r="3.6" fill="#008000"/>
<circle cx="724.5" cy="231" r="3.6" fill="#008000"/>
</g>
<!-- labels -->
<filter id="gs"><feOffset dx="0" dy="0"/></filter>
<g font-size="12" filter="url(#gs)">
<text transform="translate(15,467) scale(0.88,1)" fill="#000">A</text>
<text transform="translate(347.5,482) scale(0.95,1)" fill="#000">B</text>
<text transform="translate(150,113) scale(0.9,1)" fill="#000">C</text>
<text transform="translate(187,220) scale(0.92,1)" fill="#008000">E</text>
<text transform="translate(306.2,219) scale(1,1)" fill="#008000">D</text>
<text transform="translate(431,472) scale(1,1)" fill="#008000">P</text>
<text transform="translate(768.5,475.5) scale(0.88,1)" fill="#008000">Q</text>
<text transform="translate(726,219) scale(1,1)" fill="#008000">R</text>
</g>
</g>

<text y="567.5" font-size="12" fill="#100020"><tspan x="7" textLength="31" lengthAdjust="spacingAndGlyphs">Move:</tspan><tspan x="41.3">Seleziona</tspan><tspan x="98.8">un</tspan><tspan x="115.3">punto!</tspan></text>
</svg>
</body></html>
